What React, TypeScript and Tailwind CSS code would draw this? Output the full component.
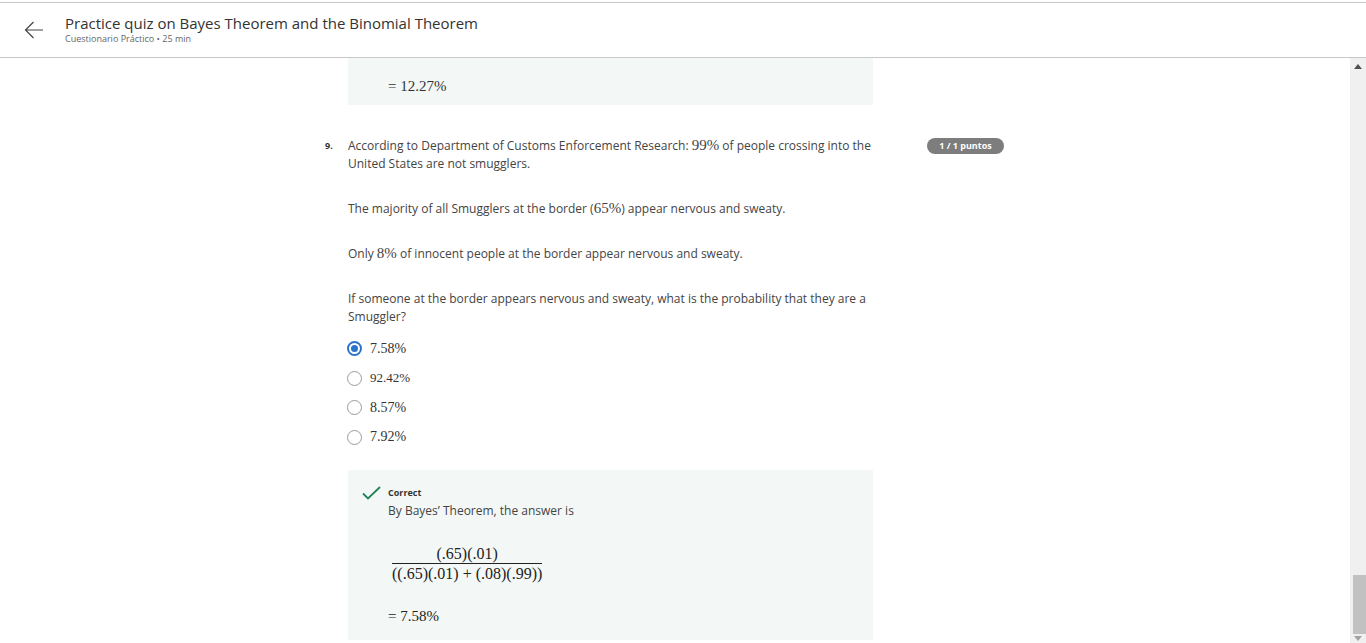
import { useState } from 'react';

const serif = { fontFamily: '"Liberation Serif", "DejaVu Serif", serif' };

function M({ children, className = '' }: { children: React.ReactNode; className?: string }) {
  return (
    <span className={`text-[14px] leading-[1] ${className}`} style={serif}>
      {children}
    </span>
  );
}

function Radio({ checked }: { checked: boolean }) {
  return checked ? (
    <span className="w-[15px] h-[15px] rounded-full border-2 border-[#2a73cc] flex items-center justify-center shrink-0">
      <span className="w-[7px] h-[7px] rounded-full bg-[#2a73cc]" />
    </span>
  ) : (
    <span className="w-[15px] h-[15px] rounded-full border border-[#9a9a9a] shrink-0" />
  );
}

const options = [
  { label: '7.58%', size: 'text-[14px]' },
  { label: '92.42%', size: 'text-[13px]' },
  { label: '8.57%', size: 'text-[14px]' },
  { label: '7.92%', size: 'text-[14px]' },
];

export default function App() {
  const [picked] = useState(0);
  return (
    <div
      className="h-[643px] w-[1366px] flex flex-col bg-white text-[#333] overflow-hidden"
      style={{ fontFamily: '"Open Sans", "Noto Sans", sans-serif' }}
    >
      {/* HEADER */}
      <div className="h-[2px]" />
      <header className="h-[56px] border-t border-b border-[#c8c8c8] flex items-center shrink-0">
        <div className="w-[65px] flex justify-center pl-[3px]">
          <svg width="20" height="18" viewBox="0 0 20 18" fill="none" stroke="#444" strokeWidth="1.2">
            <path d="M19 9H1.5M9.5 1L1.5 9l8 8" />
          </svg>
        </div>
        <div className="flex flex-col -mt-[2px]">
          <h1 className="text-[15px] leading-[20px] text-[#333]">
            Practice quiz on Bayes Theorem and the Binomial Theorem
          </h1>
          <span className="text-[9px] leading-[12px] text-[#666]">Cuestionario Práctico • 25 min</span>
        </div>
      </header>

      {/* BODY */}
      <div className="flex-1 flex min-h-0">
        <main className="flex-1 pl-[325px]">
          <div className="ml-[23px] w-[525px] h-[47px] bg-[#f3f8f6] pl-[40px] pt-[15px]">
            <M className="text-[15px]">= 12.27%</M>
          </div>

          <div className="flex mt-[32px]">
            <span className="w-[23px] text-[9px] font-bold leading-[18px] text-[#333]">9.</span>
            <div className="w-[525px] text-[12px] leading-[18px] text-[#444]">
              <p>
                According to Department of Customs Enforcement Research: <M className="text-[15px]">99%</M> of
                people crossing into the United States are not smugglers.
              </p>
              <p className="mt-[27px]">
                The majority of all Smugglers at the border (<M className="text-[15px]">65%</M>) appear nervous and
                sweaty.
              </p>
              <p className="mt-[27px]">
                Only <M className="text-[15px]">8%</M> of innocent people at the border appear nervous and sweaty.
              </p>
              <p className="mt-[27px]">
                If someone at the border appears nervous and sweaty, what is the probability that they are a
                Smuggler?
              </p>

              <div className="mt-[13px] flex flex-col gap-[10.5px] -ml-[1px]">
                {options.map((o, i) => (
                  <label key={o.label} className="flex items-center gap-[8px] h-[19px]">
                    <Radio checked={i === picked} />
                    <span className={`${o.size} text-[#333]`} style={serif}>
                      {o.label}
                    </span>
                  </label>
                ))}
              </div>

              <div className="mt-[23px] bg-[#f3f8f6] h-[170px] pl-[14px] pt-[14px]">
                <div className="flex items-center gap-[7px]">
                  <svg width="19" height="14" viewBox="0 0 19 14" fill="none" stroke="#1f8354" strokeWidth="1.8">
                    <path d="M1 7.5l5 5L18 1" />
                  </svg>
                  <span className="text-[9px] font-bold text-[#333]">Correct</span>
                </div>
                <div className="pl-[26px]">
                  <p className="text-[12px] leading-[18px] text-[#444]">By Bayes’ Theorem, the answer is</p>
                  <div className="mt-[25px] inline-flex flex-col items-center ml-[4px]" style={serif}>
                    <span className="text-[16px] leading-[18px] text-[#222]">(.65)(.01)</span>
                    <span className="h-px w-full bg-[#222]" />
                    <span className="text-[16px] leading-[20px] text-[#222]">((.65)(.01) + (.08)(.99))</span>
                  </div>
                  <div className="mt-[24px]">
                    <M className="text-[15px] text-[#222]">= 7.58%</M>
                  </div>
                </div>
              </div>
            </div>
            <div className="ml-[54px] mt-[-6px]">
              <span className="inline-flex items-center justify-center w-[77px] h-[16px] rounded-full bg-[#7d7d7d] text-white text-[9px] font-bold">
                1 / 1 puntos
              </span>
            </div>
          </div>
        </main>

        {/* SCROLLBAR */}
        <div className="w-[16px] bg-[#f0f0f0] flex flex-col items-center pt-[6px] pb-[2px]">
          <svg width="8" height="5" viewBox="0 0 8 5">
            <path d="M0 5L4 0l4 5z" fill="#505050" />
          </svg>
          <div className="flex-1" />
          <div className="w-[13px] ml-[2px] h-[59px] bg-[#c1c1c1]" />
          <svg width="8" height="5" viewBox="0 0 8 5" className="mt-[2px]">
            <path d="M0 0l4 5 4-5z" fill="#a3a3a3" />
          </svg>
        </div>
      </div>
    </div>
  );
}
